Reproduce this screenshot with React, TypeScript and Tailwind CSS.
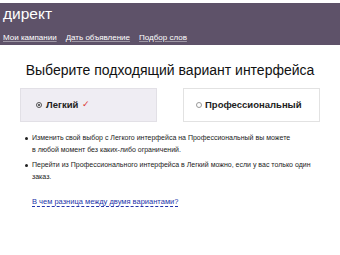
export default function App() {
  return (
    <div className="h-[255px] w-[340px] overflow-hidden bg-white pt-[3px] font-['Liberation_Sans',Arial,sans-serif] text-[#222]">
      <header className="h-[42px] bg-[#5e5269] px-[3px]">
        <div className="pt-[1px] text-[15.5px] leading-[20px] text-white">директ</div>
        <nav className="mt-[9px] flex gap-[9px] text-[8px] leading-[10px] text-white">
          <a className="underline decoration-white/40">Мои кампании</a>
          <a className="underline decoration-white/40">Дать объявление</a>
          <a className="underline decoration-white/40">Подбор слов</a>
        </nav>
      </header>

      <h1 className="mt-[16px] text-center text-[14px] leading-[18px] text-[#111]">
        Выберите подходящий вариант интерфейса
      </h1>

      <div className="mt-[9px] flex justify-between px-[20px]">
        <div className="flex h-[34px] w-[137px] items-center gap-[4px] border border-[#e2e0e6] bg-[#efedf3] pl-[15px] text-[9.5px] font-bold">
          <span className="grid h-[6px] w-[6px] place-items-center rounded-full border border-[#555]">
            <span className="h-[2px] w-[2px] rounded-full bg-[#333]" />
          </span>
          <span>Легкий</span>
          <span className="text-[9px] font-normal text-[#d33]">✓</span>
        </div>
        <div className="flex h-[34px] w-[137px] items-center gap-[3px] border border-[#e2e2e2] bg-white pl-[12px] text-[9.5px] font-bold">
          <span className="h-[6px] w-[6px] rounded-full border border-[#999]" />
          <span>Профессиональный</span>
        </div>
      </div>

      <ul className="mt-[10px] flex flex-col gap-[3px] pl-[25px] pr-[20px] text-[7px] leading-[12px] text-[#222]">
        <li className="flex gap-[4px]">
          <span className="mt-[5px] h-[3px] w-[3px] shrink-0 rounded-full bg-[#222]" />
          <span>
            Изменить свой выбор с Легкого интерфейса на Профессиональный вы можете
            <br />в любой момент без каких-либо ограничений.
          </span>
        </li>
        <li className="flex gap-[4px]">
          <span className="mt-[5px] h-[3px] w-[3px] shrink-0 rounded-full bg-[#222]" />
          <span>Перейти из Профессионального интерфейса в Легкий можно, если у вас только один заказ.</span>
        </li>
      </ul>

      <a className="ml-[32px] mt-[14px] inline-block border-b border-dashed border-[#2233aa] text-[7.5px] leading-[9px] text-[#2233aa]">
        В чем разница между двумя вариантами?
      </a>
    </div>
  );
}
